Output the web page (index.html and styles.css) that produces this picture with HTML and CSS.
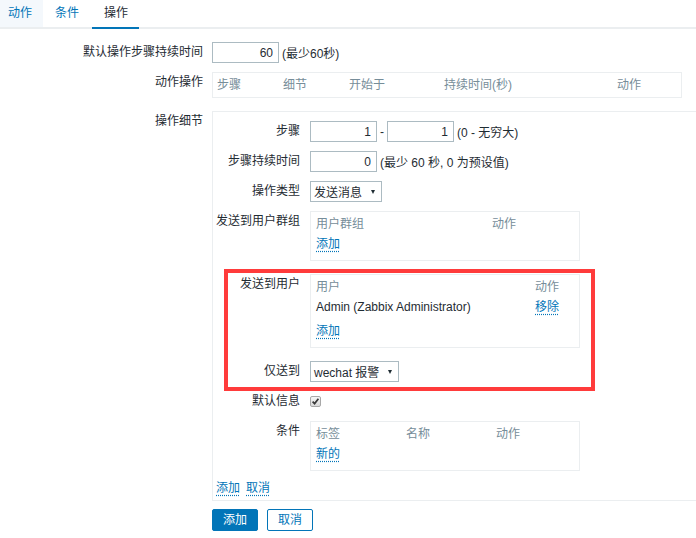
FILE: index.html
```html
<!DOCTYPE html>
<html lang="zh-CN">
<head>
<meta charset="utf-8">
<title>操作</title>
<link rel="stylesheet" href="styles.css">
</head>
<body>
<nav class="tabs">
  <a class="tab tab-first" href="#">动作</a>
  <a class="tab tab-second" href="#">条件</a>
  <a class="tab tab-active" href="#">操作</a>
</nav>

<div class="form">
  <div class="flabel">默认操作步骤持续时间</div>
  <div class="fctl">
    <input class="input" type="text" value="60">
    <span>(最少60秒)</span>
  </div>

  <div class="flabel">动作操作</div>
  <div class="fctl fctl-top">
    <div class="box box-ops cols-ops">
      <div class="trow th"><span>步骤</span><span>细节</span><span>开始于</span><span>持续时间(秒)</span><span>动作</span></div>
    </div>
  </div>

  <div class="flabel">操作细节</div>
  <div class="details">
    <div class="row">
      <div class="rlabel">步骤</div>
      <div class="rctl">
        <input class="input" type="text" value="1">
        <span>-</span>
        <input class="input" type="text" value="1">
        <span>(0 - 无穷大)</span>
      </div>
    </div>
    <div class="row">
      <div class="rlabel">步骤持续时间</div>
      <div class="rctl">
        <input class="input" type="text" value="0">
        <span>(最少 60 秒, 0 为预设值)</span>
      </div>
    </div>
    <div class="row">
      <div class="rlabel">操作类型</div>
      <div class="rctl">
        <div class="select"><span>发送消息</span><span class="caret"></span></div>
      </div>
    </div>
    <div class="row">
      <div class="rlabel">发送到用户群组</div>
      <div class="rctl rctl-top">
        <div class="box cols-groups">
          <div class="trow th"><span>用户群组</span><span>动作</span></div>
          <div class="trow"><a class="link" href="#">添加</a></div>
        </div>
      </div>
    </div>

    <div class="highlight">
      <div class="row">
        <div class="rlabel">发送到用户</div>
        <div class="rctl rctl-top">
          <div class="box cols-users">
            <div class="trow th"><span>用户</span><span>动作</span></div>
            <div class="trow"><span>Admin (Zabbix Administrator)</span><a class="link" href="#">移除</a></div>
            <div class="trow trow-add"><a class="link" href="#">添加</a></div>
          </div>
        </div>
      </div>
      <div class="row">
        <div class="rlabel">仅送到</div>
        <div class="rctl">
          <div class="select select-wide"><span>wechat 报警</span><span class="caret"></span></div>
        </div>
      </div>
    </div>

    <div class="row">
      <div class="rlabel">默认信息</div>
      <div class="rctl">
        <span class="checkbox"><svg viewBox="0 0 9 9" width="9" height="9"><path d="M1.6 4.6 L3.6 6.6 L7.4 1.8" fill="none" stroke="#3a3a3a" stroke-width="1.7"/></svg></span>
      </div>
    </div>
    <div class="row">
      <div class="rlabel">条件</div>
      <div class="rctl rctl-top">
        <div class="box box-last cols-conds">
          <div class="trow th"><span>标签</span><span>名称</span><span>动作</span></div>
          <div class="trow"><a class="link" href="#">新的</a></div>
        </div>
      </div>
    </div>
    <div class="links">
      <a class="link" href="#">添加</a>
      <a class="link" href="#">取消</a>
    </div>
  </div>

  <div class="buttons">
    <button class="btn btn-primary" type="button">添加</button>
    <button class="btn btn-alt" type="button">取消</button>
  </div>
</div>
</body>
</html>
```

FILE: styles.css
```css
html, body {
  margin: 0;
  padding: 0;
  background: #ffffff;
  overflow: hidden;
}

body {
  font-family: "Liberation Sans", Arial, "Noto Sans CJK SC", sans-serif;
  font-size: 12px;
  color: #1f2c33;
}

/* Tabs */
.tabs {
  display: flex;
  height: 27px;
  border-bottom: 2px solid #ebeef0;
}

.tab {
  line-height: 27px;
  padding: 0 12px;
  color: #0275b8;
  text-decoration: none;
}

.tab-first {
  padding: 0 11px 0 8px;
  background: #f4f8fc;
}

.tab-second {
  padding: 0 13px 0 12px;
}

.tab-active {
  padding: 0 11px 0 12px;
  color: #1f2c33;
  border-bottom: 2px solid #0275b8;
  margin-bottom: -2px;
}

/* Form */
.form {
  display: grid;
  grid-template-columns: 203px 1fr;
  column-gap: 9px;
  row-gap: 9px;
  padding-top: 13px;
}

.flabel {
  text-align: right;
  line-height: 21px;
  white-space: nowrap;
}

.fctl {
  display: flex;
  align-items: center;
  gap: 3px;
  min-height: 21px;
}

.fctl-top {
  align-items: flex-start;
}

.input {
  box-sizing: border-box;
  width: 67px;
  height: 21px;
  margin: 0;
  padding: 0 5px;
  border: 1px solid #acbbc2;
  border-radius: 0;
  background: #ffffff;
  font: inherit;
  color: #1f2c33;
  text-align: right;
  outline: none;
}

.select {
  box-sizing: border-box;
  display: inline-flex;
  align-items: center;
  height: 21px;
  padding: 0 6px 0 3px;
  border: 1px solid #acbbc2;
  background: #ffffff;
  white-space: nowrap;
}

.caret {
  width: 0;
  height: 0;
  margin-left: 9px;
  border-left: 2.5px solid transparent;
  border-right: 2.5px solid transparent;
  border-top: 4px solid #1f2c33;
}

/* Table boxes */
.box {
  box-sizing: border-box;
  width: 270px;
  padding: 2px 5px 6px;
  border: 1px solid #ebeef0;
  margin-bottom: 4px;
}

.box-ops {
  width: 470px;
  padding: 2px 4px 2px;
}

.box-last {
  margin-bottom: 0;
}

.trow {
  display: grid;
  height: 20px;
  line-height: 20px;
  white-space: nowrap;
}

.trow-add {
  margin-top: 4px;
}

.th {
  color: #768d99;
}

.cols-ops .trow {
  grid-template-columns: 66px 66px 95px 173px 1fr;
}

.cols-groups .trow {
  grid-template-columns: 176px 1fr;
}

.cols-users .trow {
  grid-template-columns: 219px 1fr;
}

.cols-conds .trow {
  grid-template-columns: 90px 90px 1fr;
}

.link {
  color: #0275b8;
  text-decoration: underline dotted;
  text-underline-offset: 3px;
  justify-self: start;
}

/* Operation details */
.details {
  display: flex;
  flex-direction: column;
  gap: 9px;
  padding: 9px 0 4px 3px;
  border: 1px solid #ebeef0;
  border-right: 0;
}

.row {
  display: flex;
  gap: 10px;
}

.rlabel {
  flex-shrink: 0;
  width: 84px;
  text-align: right;
  line-height: 21px;
  white-space: nowrap;
}

.rctl {
  display: flex;
  align-items: center;
  gap: 3px;
  min-height: 21px;
  white-space: nowrap;
}

.rctl-top {
  align-items: flex-start;
}

.highlight {
  position: relative;
  display: flex;
  flex-direction: column;
  gap: 9px;
}

.highlight::after {
  content: "";
  position: absolute;
  left: 8px;
  top: -5px;
  width: 371px;
  height: 122px;
  box-sizing: border-box;
  border: 4px solid #ff3b3b;
  pointer-events: none;
}

.checkbox {
  box-sizing: border-box;
  display: flex;
  align-items: center;
  justify-content: center;
  width: 11px;
  height: 11px;
  border: 1px solid #a8a8a8;
  border-radius: 2px;
  background: linear-gradient(#f6f6f6, #d9d9d9);
}

.links {
  display: flex;
  gap: 6px;
  line-height: 16px;
  height: 16px;
}

/* Buttons */
.buttons {
  grid-column: 2;
  display: flex;
  gap: 9px;
  margin-top: -1px;
}

.btn {
  box-sizing: border-box;
  height: 22px;
  padding: 0 10px;
  border: 1px solid #0275b8;
  border-radius: 2px;
  font: inherit;
  line-height: 20px;
  cursor: pointer;
}

.btn-primary {
  background: #0275b8;
  color: #ffffff;
}

.btn-alt {
  background: #ffffff;
  color: #0275b8;
}
```
